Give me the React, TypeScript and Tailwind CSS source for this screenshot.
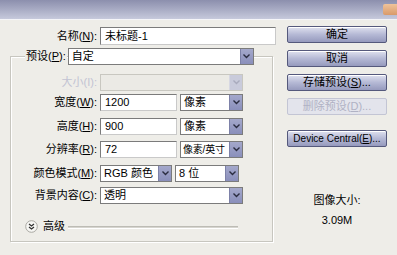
import React from "react";

const Arrow = ({ disabled }: { disabled?: boolean }) => (
  <div
    className={`w-[13px] h-full shrink-0 flex items-center justify-center border-l ${
      disabled ? "bg-[#c9cbdb] border-[#d6d7e2]" : "bg-gradient-to-b from-[#a4a8cb] to-[#8a8fbb] border-[#7d81a8]"
    }`}
  >
    <svg width="7" height="5" viewBox="0 0 7 5">
      <path d="M0.5 0.5 L3.5 3.5 L6.5 0.5" fill="none" stroke={disabled ? "#a9abbd" : "#2a2c40"} strokeWidth="1.4" />
    </svg>
  </div>
);

function Select({ value, w, disabled, tight }: { value: string; w: string; disabled?: boolean; tight?: boolean }) {
  return (
    <div
      className={`${w} h-[17px] flex border ${
        disabled ? "border-[#c8c7c0] bg-[#ebeae5]" : "border-[#7b7b7b] bg-white"
      }`}
    >
      <div
        className={`flex-1 min-w-0 flex items-center leading-none whitespace-nowrap overflow-hidden ${
          tight ? "pl-[2px] text-[10px] tracking-[-0.2px]" : "pl-[3px]"
        }`}
      >
        {value}
      </div>
      <Arrow disabled={disabled} />
    </div>
  );
}

function Input({ value, w, h = "h-[17px]" }: { value: string; w: string; h?: string }) {
  return (
    <div className={`${w} ${h} bg-white border border-[#7b7b7b] border-r-[#c9c9c9] border-b-[#c9c9c9] pl-[4px] flex items-center leading-none`}>
      {value}
    </div>
  );
}

function Row({ label, k, children, className = "" }: { label: string; k: string; children: React.ReactNode; className?: string }) {
  return (
    <div className={`flex items-center h-[17px] ${className}`}>
      <div className="w-[86px] text-right leading-none whitespace-nowrap">
        {label}(<u>{k}</u>):
      </div>
      <div className="ml-[3px] flex gap-[3px]">{children}</div>
    </div>
  );
}

function Btn({ children, disabled, className = "" }: { children: React.ReactNode; disabled?: boolean; className?: string }) {
  return (
    <div
      className={`h-[17px] rounded-[2px] border flex items-center justify-center leading-none whitespace-nowrap ${className} ${
        disabled
          ? "border-[#c3c5d4] bg-[#e3e4ec] text-[#b0b2c4]"
          : "border-[#55597c] bg-gradient-to-b from-[#e0e2ef] via-[#b5b9d5] to-[#969abd] shadow-[inset_0_1px_0_#ffffff]"
      }`}
    >
      {children}
    </div>
  );
}

export default function App() {
  return (
    <div className="w-[397px] h-[255px] overflow-hidden bg-[#eeede8] flex flex-col text-[11px] text-black font-['Liberation_Sans','Noto_Sans_CJK_SC',sans-serif]">
      <div className="h-[20px] bg-gradient-to-b from-[#8c8fad] to-[#c6c9dc] border-b border-[#f4f4f8] flex justify-end">
        <div className="w-[14px] h-[11px] mt-[4px] bg-gradient-to-b from-[#efc39a] to-[#d99a6a] rounded-l-[2px]" />
      </div>
      <div className="flex flex-1">
        <div className="w-[280px] flex flex-col">
          <div className="mt-[7px] flex items-center h-[18px]">
            <div className="w-[97px] text-right leading-none">
              名称(<u>N</u>):
            </div>
            <div className="ml-[3px]">
              <Input value="未标题-1" w="w-[176px]" h="h-[18px]" />
            </div>
          </div>
          <div className="ml-[10px] mt-[11px] w-[263px] h-[186px] border border-[#c7c6bf] shadow-[inset_1px_1px_0_#ffffff,1px_1px_0_#ffffff] flex flex-col">
            <div className="-mt-[9px] flex items-center h-[17px]">
              <div className="w-[14px]" />
              <div className="bg-[#eeede8] px-[1px] leading-none whitespace-nowrap">
                预设(<u>P</u>):
              </div>
              <div className="ml-[1px]">
                <Select value="自定" w="w-[186px]" />
              </div>
            </div>
            <div className="mt-[9px] flex items-center h-[17px]">
              <div className="w-[86px] text-right leading-none text-[#c2c3d3] whitespace-nowrap">大小(I):</div>
              <div className="ml-[3px]">
                <Select value="" w="w-[143px]" disabled />
              </div>
            </div>
            <Row label="宽度" k="W" className="mt-[3px]">
              <Input value="1200" w="w-[77px]" />
              <Select value="像素" w="w-[63px]" />
            </Row>
            <Row label="高度" k="H" className="mt-[7px]">
              <Input value="900" w="w-[77px]" />
              <Select value="像素" w="w-[63px]" />
            </Row>
            <Row label="分辨率" k="R" className="mt-[6px]">
              <Input value="72" w="w-[77px]" />
              <Select value="像素/英寸" w="w-[63px]" tight />
            </Row>
            <Row label="颜色模式" k="M" className="mt-[7px]">
              <Select value="RGB 颜色" w="w-[72px]" />
              <Select value="8 位" w="w-[64px]" />
            </Row>
            <Row label="背景内容" k="C" className="mt-[5px]">
              <Select value="透明" w="w-[143px]" />
            </Row>
            <div className="mt-[16px] flex items-center h-[13px]">
              <div className="w-[14px]" />
              <svg width="13" height="13" viewBox="0 0 13 13">
                <circle cx="6.5" cy="6.5" r="5.8" fill="#f7f7f4" stroke="#a9a8a2" strokeWidth="1" />
                <path d="M4 4 L6.5 6 L9 4 M4 7 L6.5 9 L9 7" fill="none" stroke="#333" strokeWidth="1.3" />
              </svg>
              <div className="ml-[5px] leading-none">高级</div>
              <div className="ml-[3px] w-[170px] h-[3px] border-t border-[#bdbcb5] border-b border-b-white bg-[#d6d5cf] mt-[1px]" />
            </div>
          </div>
        </div>
        <div className="ml-[7px] w-[100px] flex flex-col">
          <Btn className="mt-[6px]">确定</Btn>
          <Btn className="mt-[7px]">取消</Btn>
          <Btn className="mt-[7px]">
            存储预设(<u>S</u>)...
          </Btn>
          <Btn className="mt-[7px]" disabled>
            删除预设(<u>D</u>)...
          </Btn>
          <Btn className="mt-[15px] text-[10px]">
            Device Central(<u>E</u>)...
          </Btn>
          <div className="mt-[48px] text-center leading-none">图像大小:</div>
          <div className="mt-[9px] text-center leading-none">3.09M</div>
        </div>
      </div>
    </div>
  );
}
